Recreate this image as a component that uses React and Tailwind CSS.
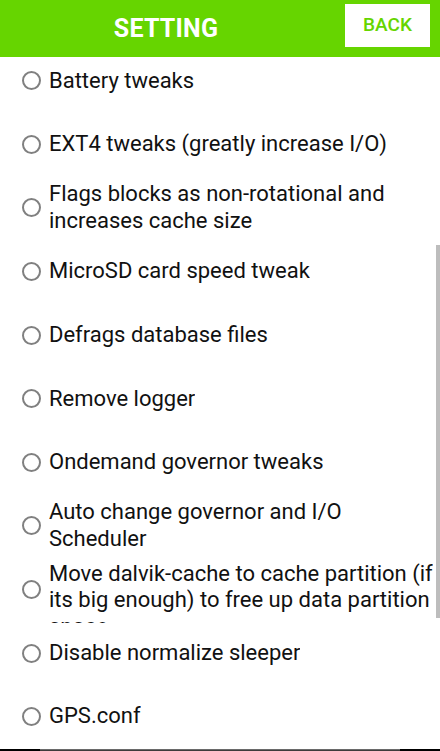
import React from "react";

const items = [
  ["Battery tweaks"],
  ["EXT4 tweaks (greatly increase I/O)"],
  ["Flags blocks as non-rotational and", "increases cache size"],
  ["MicroSD card speed tweak"],
  ["Defrags database files"],
  ["Remove logger"],
  ["Ondemand governor tweaks"],
  ["Auto change governor and I/O", "Scheduler"],
  [
    "Move dalvik-cache to cache partition (if",
    "its big enough) to free up data partition",
    "space",
  ],
  ["Disable normalize sleeper"],
  ["GPS.conf"],
];

const Row = ({ lines }) => (
  <div className="flex items-center h-[63.6px] py-[3px] pl-[22px]">
    <span className="shrink-0 w-[19px] h-[19px] rounded-full border-2 border-[#808080]" />
    <div className="self-stretch flex [align-items:safe_center] ml-[8px] min-w-0">
      <p className="max-h-[62px] overflow-hidden text-[22px] leading-[26.5px] text-[#111111]">
        {lines.map((line) => (
          <span key={line} className="block whitespace-nowrap">
            {line}
          </span>
        ))}
      </p>
    </div>
  </div>
);

const App = () => {
  return (
    <div className="relative w-[440px] h-[751px] flex flex-col bg-white font-['Roboto','Liberation_Sans',sans-serif] overflow-hidden">
      {/* header */}
      <div className="relative z-10 flex items-center h-[57px] shrink-0 bg-[#66d500]">
        <h1 className="flex-1 text-center text-[25px] font-bold text-white tracking-[0.2px] pr-[13px]">
          SETTING
        </h1>
        <button className="mr-[10px] mb-[6px] w-[85px] h-[43px] bg-white text-[#66d500] text-[19px] font-medium">
          BACK
        </button>
      </div>

      {/* list */}
      <div className="relative flex-1 overflow-hidden">
        <div className="-mt-[8px]">
          {items.map((lines, i) => (
            <Row key={i} lines={lines} />
          ))}
        </div>
        {/* scrollbar */}
        <div className="absolute right-0 top-[188px] w-[4px] h-[373px] bg-[#bdbdbd]" />
      </div>

      {/* bottom edge */}
      <div className="flex h-[2px] shrink-0 bg-black">
        <div className="mx-[40px] flex-1 bg-[#3c3c3c] border-t border-[#6a6a6a]" />
      </div>
    </div>
  );
};

export default App;
